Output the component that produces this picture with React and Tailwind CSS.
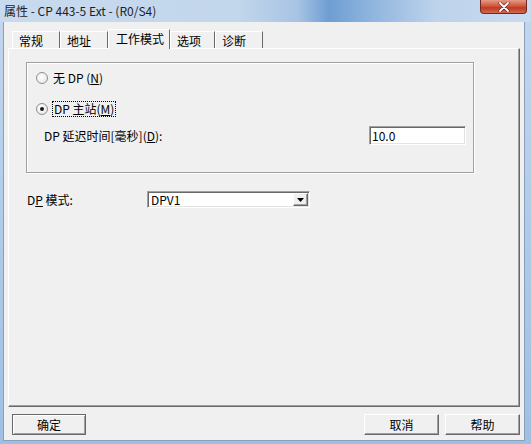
import React from "react";

function Radio({ checked }) {
  return (
    <span className="flex h-[12px] w-[12px] shrink-0 items-center justify-center rounded-full border border-[#8e8f8f] bg-[radial-gradient(circle_at_40%_40%,#ffffff,#e2e3e4)]">
      {checked && <span className="h-[4px] w-[4px] rounded-full bg-[#1b1b1b]" />}
    </span>
  );
}

function Tab({ label, active, w }) {
  if (active) {
    return (
      <div className={`relative z-10 -mb-px flex h-[20px] items-start border-l border-t border-r border-white border-r-[#696969] bg-[#f0f0f0] pl-[7px] pt-[2px] ${w}`}>
        <span className="text-[12px] leading-[14px]">{label}</span>
      </div>
    );
  }
  return (
    <div className={`flex h-[17px] items-start border-l border-t border-r border-white border-r-[#696969] bg-[#f0f0f0] pl-[6px] pt-[2px] ${w}`}>
      <span className="text-[12px] leading-[14px]">{label}</span>
    </div>
  );
}

function Button({ label, isDefault }) {
  return (
    <button
      className={
        isDefault
          ? "flex h-[21px] w-[74px] items-center justify-center border border-[#696969] bg-[#f0f0f0] text-[12px] leading-[14px] shadow-[inset_1px_1px_0_#ffffff,inset_-1px_-1px_0_#a0a0a0]"
          : "flex h-[21px] w-[75px] items-center justify-center border border-white border-r-[#696969] border-b-[#696969] bg-[#f0f0f0] text-[12px] leading-[14px] shadow-[inset_-1px_-1px_0_#a0a0a0]"
      }
    >
      {label}
    </button>
  );
}

export default function App() {
  return (
    <div className="flex h-[444px] w-[531px] flex-col overflow-hidden bg-[linear-gradient(to_bottom,#c3d7ee,#9fbfe2)] font-['Noto_Sans_CJK_SC',sans-serif] text-black">
      {/* title bar */}
      <div className="flex h-[22px] shrink-0 items-start justify-between bg-[linear-gradient(90deg,#c8daee_0%,#c2d6ec_45%,#a7c4e4_56%,#6e9ed2_62%,#8fb5de_70%,#bdd3eb_82%,#c9dbef_100%)]">
        <span className="pl-[4px] pt-[3px] text-[12px] leading-[15px] text-[#1e1e1e]">属性 - CP 443-5 Ext - (R0/S4)</span>
        <div className="mr-[4px] flex h-[14px] w-[47px] items-center justify-center rounded-b-[4px] border border-t-0 border-[#6e2b24] bg-[linear-gradient(to_bottom,#e59a87,#d2583f_45%,#bd3a25_60%,#d56a4e)]">
          <svg width="12" height="10" viewBox="0 0 12 10">
            <path d="M2 1 L10 9 M10 1 L2 9" stroke="#5a1b14" strokeWidth="3" strokeLinecap="round" />
            <path d="M2 1 L10 9 M10 1 L2 9" stroke="#ffffff" strokeWidth="1.8" strokeLinecap="round" />
          </svg>
        </div>
      </div>

      {/* client */}
      <div className="mb-[3px] ml-[3px] mr-[6px] flex flex-1 flex-col border border-t-0 border-[#8aa0ba] bg-[#f0f0f0] px-[4px]">
        <div className="flex h-[26px] shrink-0 items-end pl-[4px]">
          <Tab label="常规" w="w-[48px]" />
          <Tab label="地址" w="w-[48px]" />
          <Tab label="工作模式" active w="w-[62px]" />
          <Tab label="选项" w="w-[45px]" />
          <Tab label="诊断" w="w-[48px]" />
        </div>

        <div className="flex flex-1 flex-col border border-white border-r-[#696969] border-b-[#696969] pl-[17px] pt-[13px] shadow-[inset_-1px_-1px_0_#a0a0a0]">
          <div className="flex h-[111px] w-[448px] flex-col border border-[#a0a0a0] pt-[8px] shadow-[inset_1px_1px_0_#ffffff,1px_1px_0_#ffffff]">
            <div className="flex h-[14px] items-center gap-[5px] pl-[9px]">
              <Radio />
              <span className="text-[12px] leading-[14px]">无 DP (<span className="underline">N</span>)</span>
            </div>
            <div className="mt-[16px] flex h-[16px] items-center gap-[4px] pl-[9px]">
              <Radio checked />
              <span className="border border-dotted border-black px-[1px] text-[12px] leading-[14px]">DP 主站(<span className="underline">M</span>)</span>
            </div>
            <div className="mt-[9px] flex h-[19px] items-center justify-between pl-[17px] pr-[7px]">
              <span className="text-[12px] leading-[14px]">DP 延迟时间[毫秒](<span className="underline">D</span>):</span>
              <div className="flex h-[19px] w-[97px] items-center border border-[#a0a0a0] border-r-white border-b-white bg-white pl-[2px] shadow-[inset_1px_1px_0_#696969,inset_-1px_-1px_0_#e3e3e3]">
                <span className="text-[12px] leading-[14px]">10.0</span>
              </div>
            </div>
          </div>

          <div className="mt-[18px] flex h-[17px] items-center">
            <span className="w-[121px] pl-[1px] text-[12px] leading-[14px]">D<span className="underline">P</span> 模式:</span>
            <div className="flex h-[17px] w-[163px] items-center justify-between border border-[#a0a0a0] border-r-white border-b-white bg-white pl-[3px] pr-[1px] shadow-[inset_1px_1px_0_#696969,inset_-1px_-1px_0_#e3e3e3]">
              <span className="text-[12px] leading-[14px]">DPV1</span>
              <div className="flex h-[13px] w-[15px] items-center justify-center border border-white border-r-[#696969] border-b-[#696969] bg-[#f0f0f0] shadow-[inset_-1px_-1px_0_#a0a0a0]">
                <svg width="7" height="4" viewBox="0 0 7 4">
                  <path d="M0 0 H7 L3.5 4 Z" fill="#000000" />
                </svg>
              </div>
            </div>
          </div>
        </div>

        <div className="flex h-[33px] shrink-0 items-start justify-between pl-[4px] pt-[7px]">
          <Button label="确定" isDefault />
          <div className="flex gap-[6px]">
            <Button label="取消" />
            <Button label="帮助" />
          </div>
        </div>
      </div>
    </div>
  );
}
